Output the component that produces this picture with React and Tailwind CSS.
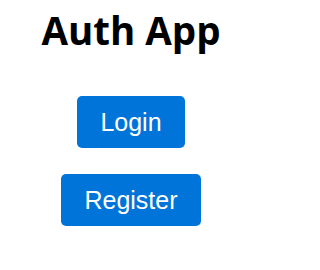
export default function App() {
  return (
    <div className="w-[262px] h-[270px] bg-white flex flex-col items-center">
      <h1
        className="mt-[6px] h-[48px] text-[38.5px] font-bold leading-[48px] text-black"
        style={{ fontFamily: '"Open Sans", sans-serif' }}
      >
        Auth App
      </h1>
      <div
        className="mt-[42px] flex flex-col items-center gap-[26px]"
        style={{ fontFamily: '"Liberation Sans", Arial, sans-serif' }}
      >
        <button className="h-[52px] px-[23px] rounded-[5px] bg-[#0074D9] text-white text-[25px] leading-none">
          Login
        </button>
        <button className="h-[52px] px-[23px] rounded-[5px] bg-[#0074D9] text-white text-[25px] leading-none">
          Register
        </button>
      </div>
    </div>
  );
}
